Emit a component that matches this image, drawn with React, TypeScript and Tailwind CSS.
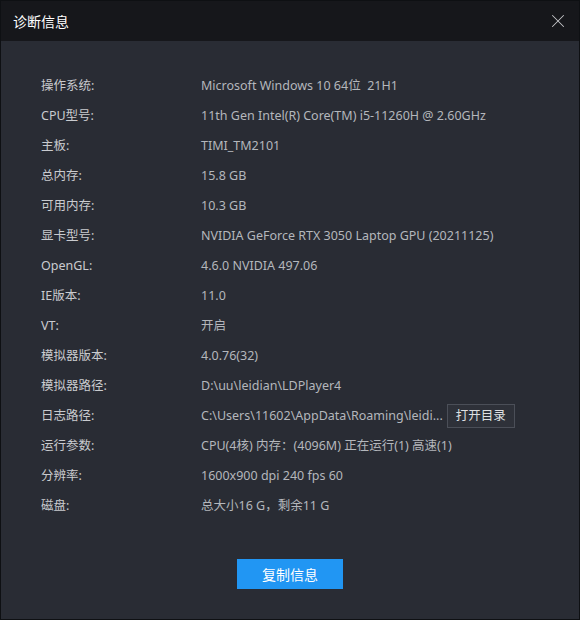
import { X } from 'lucide-react';

const rows: [string, string][] = [
  ['操作系统:', 'Microsoft Windows 10 64位  21H1'],
  ['CPU型号:', '11th Gen Intel(R) Core(TM) i5-11260H @ 2.60GHz'],
  ['主板:', 'TIMI_TM2101'],
  ['总内存:', '15.8 GB'],
  ['可用内存:', '10.3 GB'],
  ['显卡型号:', 'NVIDIA GeForce RTX 3050 Laptop GPU (20211125)'],
  ['OpenGL:', '4.6.0 NVIDIA 497.06'],
  ['IE版本:', '11.0'],
  ['VT:', '开启'],
  ['模拟器版本:', '4.0.76(32)'],
  ['模拟器路径:', 'D:\\uu\\leidian\\LDPlayer4'],
  ['日志路径:', ''],
  ['运行参数:', 'CPU(4核) 内存：(4096M) 正在运行(1) 高速(1)'],
  ['分辨率:', '1600x900 dpi 240 fps 60'],
  ['磁盘:', '总大小16 G，剩余11 G'],
];

const App = () => {
  return (
    <div
      className="w-[580px] h-[620px] flex flex-col border border-[#0e1013] bg-[#292c34]"
      style={{ fontFamily: '"Noto Sans", "Noto Sans CJK SC", sans-serif' }}
    >
      {/* 标题栏 */}
      <div className="h-[40px] shrink-0 flex items-center justify-between bg-[#16171b] pl-[12px] pr-[10px]">
        <span className="text-[14px] text-white">诊断信息</span>
        <X className="w-[22px] h-[22px] text-[#c4c5c8]" strokeWidth={1.1} />
      </div>

      {/* 信息列表 */}
      <div className="pt-[30px] pl-[40px] text-[12.5px]">
        {rows.map(([label, value]) => (
          <div key={label} className="h-[30px] flex items-center">
            <span className="w-[160px] text-[#c9cbcf]">{label}</span>
            {label === '日志路径:' ? (
              <div className="flex items-center">
                <span className="text-[#b4b7bc]">C:\Users\11602\AppData\Roaming\leidi...</span>
                <button
                  type="button"
                  className="ml-[4px] w-[68px] h-[24px] border border-[#4b4f58] bg-[#2e3139] text-[#dfe0e2] text-[12.5px]"
                >
                  打开目录
                </button>
              </div>
            ) : (
              <span className="text-[#b4b7bc] whitespace-pre">{value}</span>
            )}
          </div>
        ))}
      </div>

      {/* 复制按钮 */}
      <div className="flex justify-center pt-[38px]">
        <button type="button" className="w-[106px] h-[30px] bg-[#2196f3] text-white text-[14px]">
          复制信息
        </button>
      </div>
    </div>
  );
};

export default App;
